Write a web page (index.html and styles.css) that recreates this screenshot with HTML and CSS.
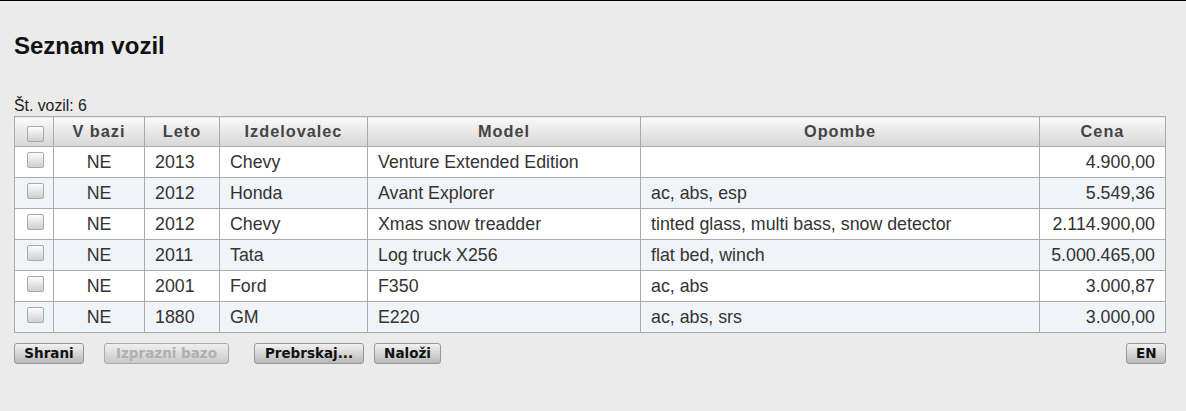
FILE: index.html
```html
<!DOCTYPE html>
<html>
<head>
<meta charset="utf-8">
<link rel="stylesheet" href="styles.css">
</head>
<body>
<div class="page">
  <h1 class="title">Seznam vozil</h1>
  <div class="count">Št. vozil: 6</div>
  <table class="grid">
    <colgroup>
      <col class="c-chk"><col class="c-db"><col class="c-year"><col class="c-make"><col class="c-model"><col class="c-notes"><col class="c-price">
    </colgroup>
    <thead>
      <tr>
        <th><span class="chk"></span></th>
        <th>V bazi</th>
        <th>Leto</th>
        <th>Izdelovalec</th>
        <th>Model</th>
        <th>Opombe</th>
        <th>Cena</th>
      </tr>
    </thead>
    <tbody>
      <tr><td class="cc"><span class="chk"></span></td><td class="ctr">NE</td><td>2013</td><td>Chevy</td><td>Venture Extended Edition</td><td></td><td class="num">4.900,00</td></tr>
      <tr><td class="cc"><span class="chk"></span></td><td class="ctr">NE</td><td>2012</td><td>Honda</td><td>Avant Explorer</td><td>ac, abs, esp</td><td class="num">5.549,36</td></tr>
      <tr><td class="cc"><span class="chk"></span></td><td class="ctr">NE</td><td>2012</td><td>Chevy</td><td>Xmas snow treadder</td><td>tinted glass, multi bass, snow detector</td><td class="num">2.114.900,00</td></tr>
      <tr><td class="cc"><span class="chk"></span></td><td class="ctr">NE</td><td>2011</td><td>Tata</td><td>Log truck X256</td><td>flat bed, winch</td><td class="num">5.000.465,00</td></tr>
      <tr><td class="cc"><span class="chk"></span></td><td class="ctr">NE</td><td>2001</td><td>Ford</td><td>F350</td><td>ac, abs</td><td class="num">3.000,87</td></tr>
      <tr><td class="cc"><span class="chk"></span></td><td class="ctr">NE</td><td>1880</td><td>GM</td><td>E220</td><td>ac, abs, srs</td><td class="num">3.000,00</td></tr>
    </tbody>
  </table>
  <div class="actions">
    <button class="btn b-save">Shrani</button>
    <button class="btn b-clear" disabled>Izprazni bazo</button>
    <button class="btn b-browse">Prebrskaj...</button>
    <button class="btn b-load">Naloži</button>
    <span class="spacer"></span>
    <button class="btn b-lang">EN</button>
  </div>
</div>
</body>
</html>
```

FILE: styles.css
```css
html, body {
  margin: 0;
  padding: 0;
  background: #ebebeb;
}
body {
  border-top: 1px solid #000;
  font-family: "Liberation Sans", Arial, sans-serif;
  color: #222;
}
.page {
  padding: 0 20px 0 14px;
}
.title {
  margin: 31px 0 0;
  font-size: 24px;
  line-height: 28px;
  font-weight: bold;
  color: #111;
}
.count {
  margin-top: 37px;
  font-size: 15.8px;
  line-height: 17px;
  color: #222;
}
.grid {
  margin-top: 2px;
  width: 1152px;
  border-collapse: collapse;
  table-layout: fixed;
  border: 1px solid #aaa;
}
.c-chk { width: 39px; }
.c-db { width: 91px; }
.c-year { width: 75px; }
.c-make { width: 148px; }
.c-model { width: 273px; }
.c-notes { width: 399px; }
.c-price { width: 126px; }
.grid th {
  height: 29px;
  padding: 0;
  border: 1px solid #aaa;
  background: linear-gradient(#fafafa, #d6d6d6);
  color: #444;
  font-size: 16.3px;
  font-weight: bold;
  letter-spacing: 1px;
  text-align: center;
  vertical-align: middle;
}
.grid td {
  height: 30px;
  padding: 0 10px;
  border: 1px solid #aaa;
  background: #fff;
  color: #333;
  font-size: 17.8px;
  white-space: nowrap;
  vertical-align: middle;
}
.grid tbody tr:nth-child(even) td {
  background: #f0f4f8;
}
.grid td.cc {
  padding: 0;
  text-align: center;
  vertical-align: top;
}
.grid td.ctr { text-align: center; }
.grid td.num { text-align: right; }
.chk {
  display: inline-block;
  box-sizing: border-box;
  width: 17px;
  height: 16px;
  border: 1px solid #aaa;
  border-radius: 2px;
  background: linear-gradient(#fdfdfd, #cfcfcf);
  vertical-align: middle;
}
.grid th .chk { margin-top: 4px; margin-left: 2px; }
.grid td.cc .chk { margin-top: 3px; margin-left: 2px; }
.actions {
  display: flex;
  align-items: center;
  margin-top: 10px;
  width: 1152px;
}
.btn {
  box-sizing: border-box;
  height: 21px;
  padding: 0 9px;
  border: 1px solid #999;
  border-radius: 3px;
  background: linear-gradient(#f2f2f2, #b8b8b8);
  font-family: "DejaVu Sans", sans-serif;
  font-size: 13.5px;
  font-weight: bold;
  color: #111;
  line-height: 19px;
}
.btn:disabled {
  color: #b0b0b0;
  border-color: #aaa;
  background: linear-gradient(#f0f0f0, #c8c8c8);
}
.b-save { width: 70px; }
.b-clear { width: 125px; margin-left: 20px; }
.b-browse { width: 110px; margin-left: 25px; }
.b-load { width: 67px; margin-left: 10px; }
.spacer { flex: 1; }
.b-lang { width: 40px; }
```
